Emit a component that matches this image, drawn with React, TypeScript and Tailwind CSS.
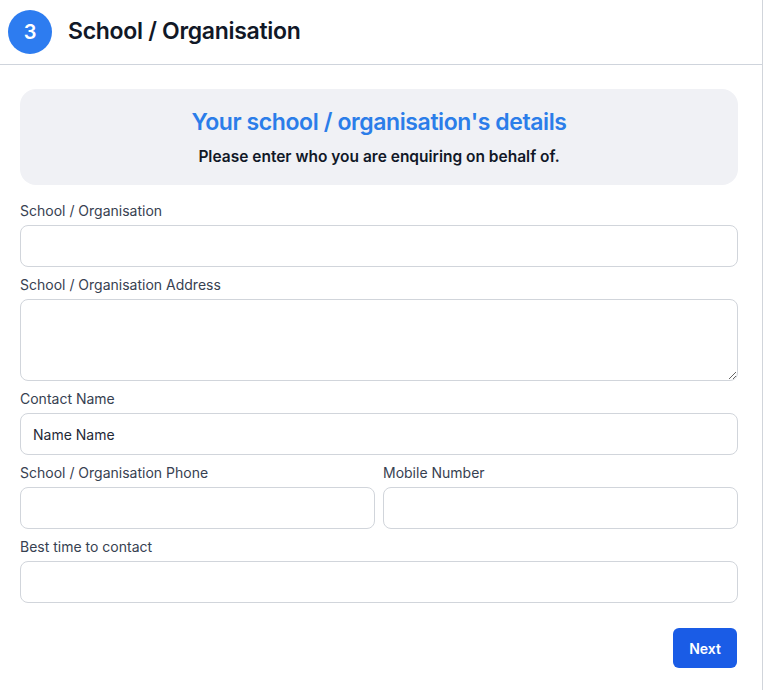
import React from "react";

function Field({ label, children }: { label: string; children: React.ReactNode }) {
  return (
    <div className="flex flex-col">
      <label className="text-[14px] leading-[20px] text-[#374151] mb-1">{label}</label>
      {children}
    </div>
  );
}

const inputCls =
  "h-[42px] w-full rounded-[8px] border border-[#d1d5db] bg-white px-3 text-[14px] text-[#1f2937] outline-none";

export default function App() {
  return (
    <div
      className="w-[763px] h-[690px] bg-white border-r border-[#d1d5db] overflow-hidden"
      style={{ fontFamily: "Inter, 'Noto Sans', sans-serif" }}
    >
      <div className="h-[65px] border-b border-[#cfd4dc] flex items-center pl-2 gap-4">
        <div className="w-[44px] h-[44px] rounded-full bg-[#2d7cf0] flex items-center justify-center text-white text-[20px] font-semibold">
          3
        </div>
        <h1 className="text-[23px] font-semibold text-[#111827] tracking-[-0.3px] -mt-[2px]">School / Organisation</h1>
      </div>
      <div className="pl-5 pr-6 pt-6">
        <div className="rounded-[16px] bg-[#f0f1f5] h-[96px] flex flex-col items-center justify-center">
          <h2 className="text-[23px] leading-[30px] font-semibold text-[#2b7de9] tracking-[-0.4px]">
            Your school / organisation's details
          </h2>
          <p className="mt-[9px] text-[15.5px] leading-[22px] font-semibold text-[#111827]">
            Please enter who you are enquiring on behalf of.
          </p>
        </div>
        <div className="mt-[16px] flex flex-col gap-2">
          <Field label="School / Organisation">
            <input className={inputCls} />
          </Field>
          <Field label="School / Organisation Address">
            <textarea className="h-[82px] w-full rounded-[8px] border border-[#d1d5db] bg-white px-3 py-2 text-[14px] outline-none block" />
          </Field>
          <Field label="Contact Name">
            <input className={inputCls} defaultValue="Name Name" />
          </Field>
          <div className="grid grid-cols-2 gap-2">
            <Field label="School / Organisation Phone">
              <input className={inputCls} />
            </Field>
            <Field label="Mobile Number">
              <input className={inputCls} />
            </Field>
          </div>
          <Field label="Best time to contact">
            <input className={inputCls} />
          </Field>
        </div>
        <div className="flex justify-end mt-[25px] pr-[1px]">
          <button className="h-[40px] w-[64px] rounded-[6px] bg-[#1a5ce6] text-white text-[14px] font-semibold">
            Next
          </button>
        </div>
      </div>
    </div>
  );
}
